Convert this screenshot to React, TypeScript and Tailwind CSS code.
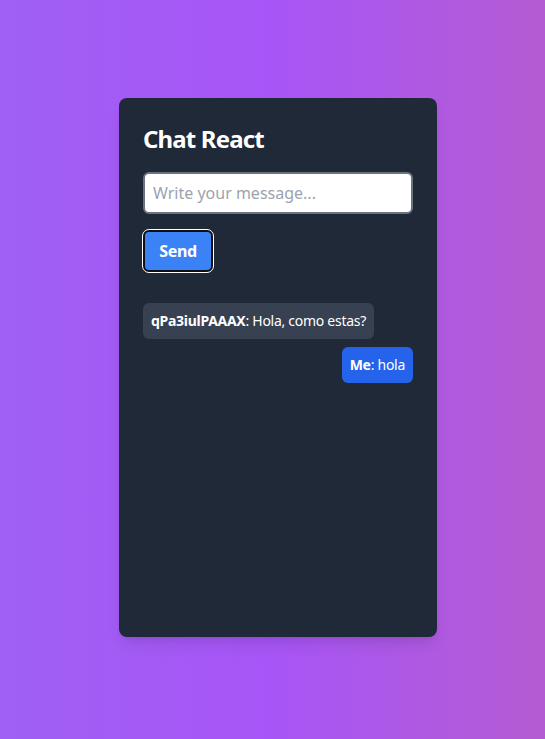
const messages = [
  { from: "qPa3iulPAAAX", body: "Hola, como estas?", mine: false },
  { from: "Me", body: "hola", mine: true },
];

export default function App() {
  return (
    <div
      className="flex min-h-[739px] items-center justify-center bg-linear-to-r from-[#9f60f4] via-[#a855f7] to-[#b45bd2] pb-1 pl-[11px] text-white"
      style={{ fontFamily: '"Noto Sans", "Open Sans", sans-serif' }}
    >
      <div className="w-[318px] rounded-lg bg-[#1f2937] p-6 shadow-lg">
        <h1 className="mb-[17px] pt-[1px] text-2xl leading-8 font-bold tracking-[-0.035em]">Chat React</h1>

        <form className="flex flex-col items-start gap-4" onSubmit={(e) => e.preventDefault()}>
          <input
            type="text"
            placeholder="Write your message..."
            className="h-[42px] w-full rounded-md border-2 border-[#6b7280] bg-white px-2 text-base text-gray-900 placeholder:text-[#9ca3af]"
          />
          <button
            type="submit"
            className="h-[42px] w-[70px] rounded-md border-2 border-[#101010] bg-[#3b82f6] font-bold tracking-[-0.02em] outline outline-1 outline-white"
          >
            Send
          </button>
        </form>

        <ul className="mt-[15px] flex h-[326px] flex-col gap-2 pt-4">
          {messages.map((m, i) => (
            <li
              key={i}
              className={
                m.mine
                  ? "self-end rounded-md bg-[#2563eb] px-2 py-2 text-sm leading-5 tracking-[-0.02em]"
                  : "self-start rounded-md bg-[#374151] px-2 py-2 text-sm leading-5 tracking-[-0.02em]"
              }
            >
              <b>{m.from}</b>: {m.body}
            </li>
          ))}
        </ul>
      </div>
    </div>
  );
}
